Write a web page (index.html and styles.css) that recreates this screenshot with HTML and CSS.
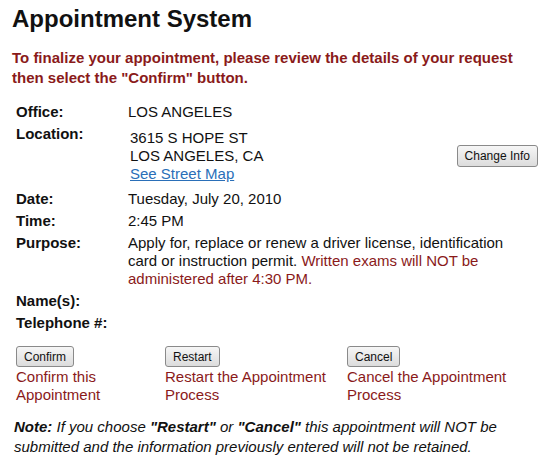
FILE: index.html
```html
<!DOCTYPE html>
<html>
  <head>
    <title>Appointment System</title>
    <meta charset='utf-8'>
    <link rel="stylesheet" href="styles.css">
  </head>

  <body>
    <h1 class="title">Appointment System</h1>

    <p class="intro">To finalize your appointment, please review the details of your request then select the "Confirm" button.</p>

    <!-- details of the request -->
    <table class="details">
      <tr>
        <th>Office:</th>
        <td>LOS ANGELES</td>
      </tr>
      <tr>
        <th>Location:</th>
        <td>
          <div class="location">
            <div class="addr">
              3615 S HOPE ST<br>
              LOS ANGELES, CA<br>
              <a href="#">See Street Map</a>
            </div>
            <button class="btn change">Change Info</button>
          </div>
        </td>
      </tr>
      <tr>
        <th>Date:</th>
        <td>Tuesday, July 20, 2010</td>
      </tr>
      <tr>
        <th>Time:</th>
        <td>2:45 PM</td>
      </tr>
      <tr>
        <th>Purpose:</th>
        <td class="purpose">Apply for, replace or renew a driver license, identification card or instruction permit. <span class="warn">Written exams will NOT be administered after 4:30 PM.</span></td>
      </tr>
      <tr>
        <th>Name(s):</th>
        <td></td>
      </tr>
      <tr>
        <th>Telephone #:</th>
        <td></td>
      </tr>
    </table>

    <div class="actions">
      <div class="action a1">
        <button class="btn">Confirm</button>
        <div class="hint">Confirm this Appointment</div>
      </div>
      <div class="action a2">
        <button class="btn">Restart</button>
        <div class="hint">Restart the Appointment Process</div>
      </div>
      <div class="action a3">
        <button class="btn">Cancel</button>
        <div class="hint">Cancel the Appointment Process</div>
      </div>
    </div>

    <p class="note"><b>Note:</b> If you choose <b>"Restart"</b> or <b>"Cancel"</b> this appointment will NOT be submitted and the information previously entered will not be retained.</p>
  </body>
</html>
```

FILE: styles.css
```css
body {
  margin: 0;
  padding: 0 12px;
  background: #ffffff;
  color: #111111;
  font-family: "Liberation Sans", Arial, sans-serif;
  font-size: 15px;
}

.title {
  margin: 4px 0 0 0;
  font-size: 24px;
  line-height: 30px;
}

.intro {
  margin: 14px 0 0 0;
  color: #8a1a1a;
  font-weight: bold;
  font-size: 15px;
  line-height: 20px;
}

.details {
  margin: 13px 0 0 2px;
  border-collapse: collapse;
  width: 524px;
}
.details th {
  text-align: left;
  vertical-align: top;
  font-weight: bold;
  width: 112px;
  padding: 2px 0 2px 2px;
  line-height: 18px;
}
.details td {
  vertical-align: top;
  padding: 2px 0;
  line-height: 18px;
}
.details td.purpose {
  padding-right: 24px;
}

.location {
  display: flex;
  align-items: center;
  justify-content: space-between;
  padding: 4px 0 3px 2px;
}
.addr a {
  color: #2a6fb8;
}

.warn {
  color: #8a1a1a;
}

.btn {
  font-family: "Liberation Sans", Arial, sans-serif;
  font-size: 12px;
  color: #111111;
  height: 21px;
  padding: 0 7px;
  border: 1px solid #8a8a8a;
  border-radius: 3px;
  background: linear-gradient(#f6f6f6, #dcdcdc);
}
.change {
  height: 22px;
}

.actions {
  display: flex;
  margin: 12px 0 0 4px;
}
.action .hint {
  color: #8a1a1a;
  line-height: 18px;
  margin-top: 1px;
}
.a1 { width: 149px; }
.a2 { width: 182px; }
.a3 { width: 180px; }

.note {
  margin: 13px 0 0 2px;
  font-style: italic;
  line-height: 20px;
}
```
